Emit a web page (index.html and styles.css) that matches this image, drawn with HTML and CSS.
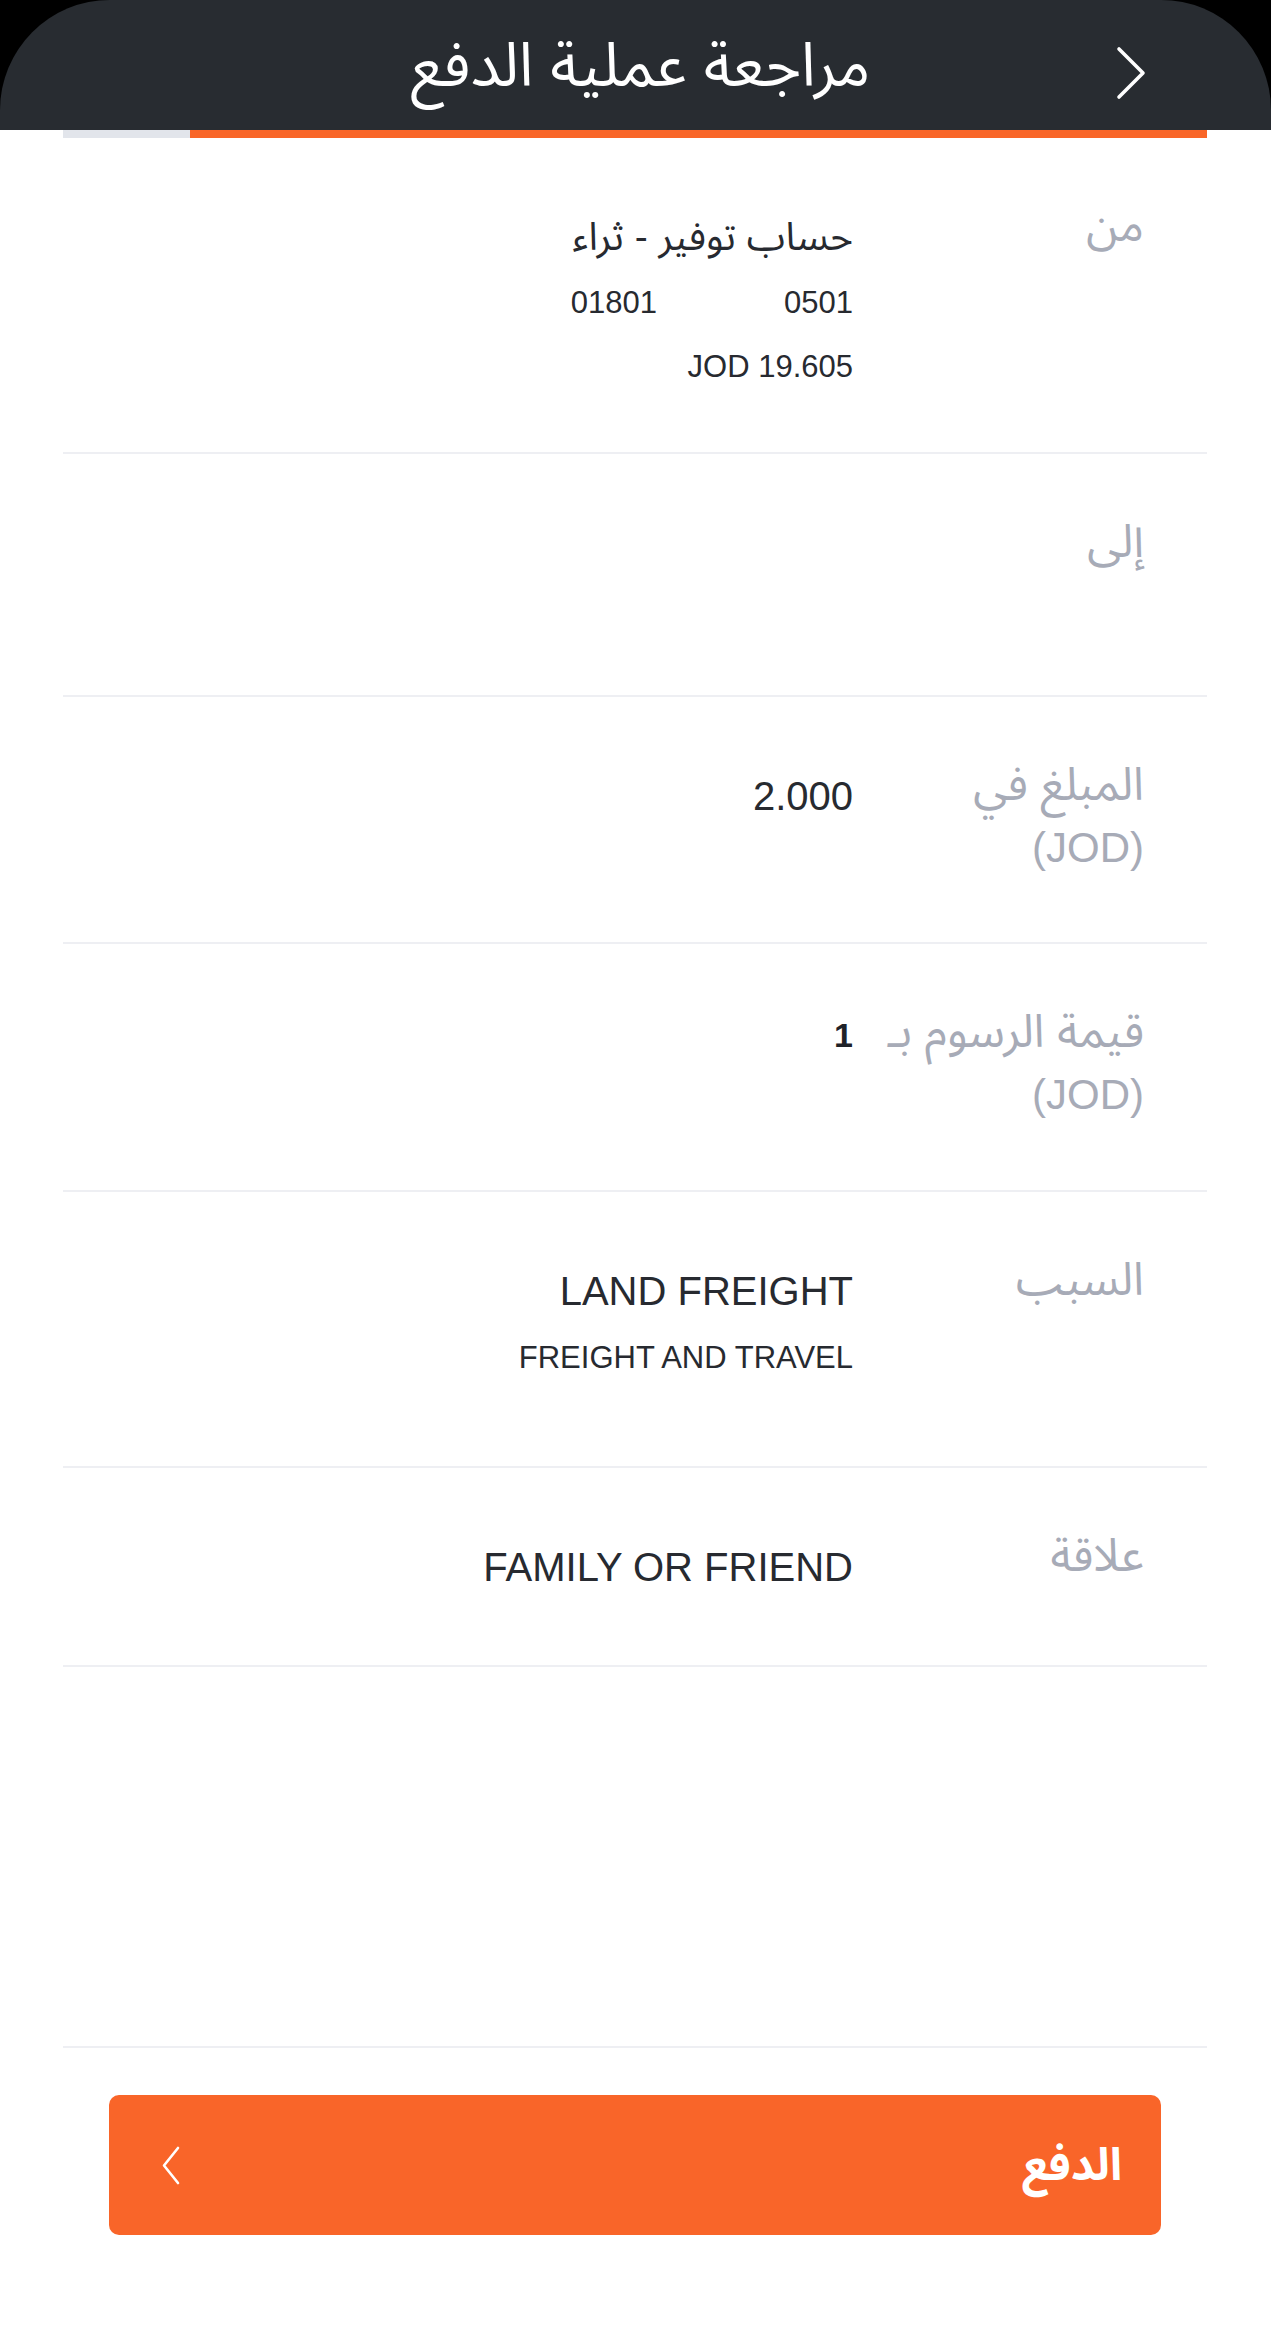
FILE: index.html
```html
<!DOCTYPE html>
<html lang="ar" dir="rtl">
<head>
    <meta charset="UTF-8">
    <meta name="viewport" content="width=device-width, initial-scale=1.0">
    <title>مراجعة عملية الدفع</title>
    <link rel="stylesheet" href="styles.css">
</head>
<body>
    <div class="screen">
        <div class="top">
            <header class="header">
                <button class="back" aria-label="رجوع">
                    <svg width="30" height="54" viewBox="0 0 30 54">
                        <polyline points="3,3 27,27 3,51" fill="none" stroke="#ffffff" stroke-width="3.6" stroke-linecap="round" stroke-linejoin="round"/>
                    </svg>
                </button>
                <h1 class="title">مراجعة عملية الدفع</h1>
                <span></span>
            </header>
        </div>

        <div class="progress">
            <div class="progress-fill" style="width: 88.9%"></div>
        </div>

        <main class="details">
            <div class="row row-from">
                <div class="label">من</div>
                <div class="value">
                    <div class="value-name">حساب توفير - ثراء</div>
                    <div class="value-sub account"><span>0501</span><span>01801</span></div>
                    <div class="value-sub balance" dir="ltr">JOD 19.605</div>
                </div>
            </div>

            <div class="row row-to">
                <div class="label">إلى</div>
                <div class="value"></div>
            </div>

            <div class="row row-amount">
                <div class="label">المبلغ في <span class="unit" dir="ltr">(JOD)</span></div>
                <div class="value">
                    <div class="value-main" dir="ltr">2.000</div>
                </div>
            </div>

            <div class="row row-fee">
                <div class="label">قيمة الرسوم بـ <span class="unit" dir="ltr">(JOD)</span></div>
                <div class="value value-tight">
                    <div class="value-main strong" dir="ltr">1</div>
                </div>
            </div>

            <div class="row row-reason">
                <div class="label">السبب</div>
                <div class="value">
                    <div class="value-main" dir="ltr">LAND FREIGHT</div>
                    <div class="value-sub spaced" dir="ltr">FREIGHT AND TRAVEL</div>
                </div>
            </div>

            <div class="row row-relation">
                <div class="label">علاقة</div>
                <div class="value">
                    <div class="value-main" dir="ltr">FAMILY OR FRIEND</div>
                </div>
            </div>
        </main>

        <footer class="footer">
            <button class="pay-btn">
                <span>الدفع</span>
                <svg width="19" height="39" viewBox="0 0 19 39">
                    <polyline points="17,2 3,19.5 17,37" fill="none" stroke="#ffffff" stroke-width="2.6" stroke-linecap="round" stroke-linejoin="round"/>
                </svg>
            </button>
        </footer>
    </div>
</body>
</html>
```

FILE: styles.css
```css
body {
    margin: 0;
    padding: 0;
    background-color: #ffffff;
    font-family: "Liberation Sans", "Noto Sans Arabic", "DejaVu Sans", sans-serif;
    color: #272a30;
}
.screen {
    min-height: 100vh;
    display: flex;
    flex-direction: column;
}

/* en-tete sombre avec coins arrondis */
.top {
    background-color: #000000;
}
.header {
    height: 130px;
    background-color: #282c31;
    border-radius: 110px 110px 0 0;
    display: grid;
    grid-template-columns: 1fr auto 1fr;
    align-items: center;
    padding: 0 125px;
}
.back {
    justify-self: start;
    background: none;
    border: none;
    padding: 0;
    margin-top: 16px;
    display: flex;
    cursor: pointer;
}
.title {
    margin: 0;
    color: #ffffff;
    font-size: 61px;
    font-weight: normal;
    line-height: 130px;
    margin-left: 10px;
}

.progress {
    margin: 0 64px 0 63px;
    height: 8px;
    background-color: #e2e5eb;
    display: flex;
}
.progress-fill {
    background-color: #f96628;
}

.details {
    margin: 0 64px 0 63px;
}
.row {
    box-sizing: border-box;
    display: grid;
    grid-template-columns: 281px 1fr;
    column-gap: 10px;
    padding: 56px 63px 0 0;
    border-bottom: 2px solid #eeeff3;
}
.row-from { height: 316px; }
.row-to { height: 243px; }
.row-amount { height: 247px; }
.row-fee { height: 248px; }
.row-reason { height: 276px; }
.row-relation { height: 199px; }

.label {
    font-size: 46px;
    line-height: 63px;
    color: #a7abb7;
    white-space: nowrap;
    text-align: right;
}
.unit {
    display: block;
    font-size: 42px;
}
.value {
    padding-top: 12px;
    text-align: right;
}
.value-tight {
    padding-top: 4px;
}
.value-name {
    font-size: 39px;
    line-height: 62px;
}
.value-main {
    font-size: 40px;
    line-height: 63px;
}
.value-sub {
    font-size: 31px;
    line-height: 62px;
}
.spaced {
    margin-top: 4px;
}
.strong {
    font-weight: bold;
    font-size: 34px;
    color: #1f2228;
}
.account {
    display: flex;
    gap: 127px;
    margin-top: 4px;
}
.balance {
    margin-top: 2px;
}

.footer {
    margin: auto 64px 0 63px;
    border-top: 2px solid #eeeff3;
    padding: 47px 46px 99px 46px;
}
.pay-btn {
    width: 100%;
    height: 140px;
    border: none;
    border-radius: 10px;
    background-color: #f96529;
    color: #ffffff;
    display: flex;
    justify-content: space-between;
    align-items: center;
    padding: 0 39px 0 52px;
    box-sizing: border-box;
    font-family: "Liberation Sans", "Noto Sans Arabic", "DejaVu Sans", sans-serif;
    font-size: 45px;
    font-weight: bold;
    cursor: pointer;
}
```
